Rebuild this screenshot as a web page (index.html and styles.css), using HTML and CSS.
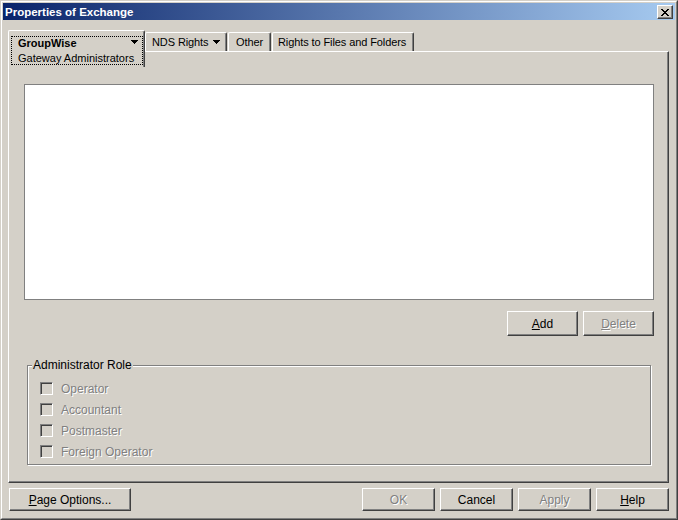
FILE: index.html
```html
<!DOCTYPE html>
<html>
<head>
<meta charset="utf-8">
<title>Properties of Exchange</title>
<link rel="stylesheet" href="styles.css">
</head>
<body>
<div class="window">
  <div class="frame">
    <div class="titlebar">
      <span class="title">Properties of Exchange</span>
      <button class="close" type="button">
        <svg width="8" height="7" viewBox="0 0 8 7" shape-rendering="crispEdges">
          <path fill="#000" d="M0 0h2v1H0zM6 0h2v1H6zM1 1h2v1H1zM5 1h2v1H5zM2 2h4v1H2zM3 3h2v1H3zM2 4h4v1H2zM1 5h2v1H1zM5 5h2v1H5zM0 6h2v1H0zM6 6h2v1H6z"/>
        </svg>
      </button>
    </div>
    <div class="client">
      <div class="tabs">
        <div class="tab sel">
          <div class="focus">
            <div class="focus-line1"><span>GroupWise</span><svg class="arrow" width="7" height="4" viewBox="0 0 7 4" shape-rendering="crispEdges"><path d="M0 0h7v1H0zM1 1h5v1H1zM2 2h3v1H2zM3 3h1v1H3z"/></svg></div>
            <div class="focus-line2">Gateway Administrators</div>
          </div>
        </div>
        <div class="tab plain nds"><span>NDS Rights</span><svg class="arrow" width="7" height="4" viewBox="0 0 7 4" shape-rendering="crispEdges"><path d="M0 0h7v1H0zM1 1h5v1H1zM2 2h3v1H2zM3 3h1v1H3z"/></svg></div>
        <div class="tab plain other">Other</div>
        <div class="tab plain rights">Rights to Files and Folders</div>
      </div>
      <div class="panel">
        <div class="listbox"></div>
        <div class="actions">
          <button class="btn act" type="button"><u>A</u>dd</button>
          <button class="btn act dis" type="button"><u>D</u>elete</button>
        </div>
        <div class="group">
          <div class="group-label">Administrator Role</div>
          <div class="checks">
            <div class="check"><span class="box"></span><span>Operator</span></div>
            <div class="check"><span class="box"></span><span>Accountant</span></div>
            <div class="check"><span class="box"></span><span>Postmaster</span></div>
            <div class="check"><span class="box"></span><span>Foreign Operator</span></div>
          </div>
        </div>
      </div>
      <div class="footer">
        <button class="btn wide" type="button"><u>P</u>age Options...</button>
        <div class="footer-right">
          <button class="btn std dis" type="button">OK</button>
          <button class="btn std" type="button">Cancel</button>
          <button class="btn std dis" type="button">Apply</button>
          <button class="btn std" type="button"><u>H</u>elp</button>
        </div>
      </div>
    </div>
  </div>
</div>
</body>
</html>
```
FILE: styles.css
```css
body {
  margin: 0;
  font-family: "Liberation Sans", Arial, sans-serif;
  font-size: 11px;
  color: #000;
}

.window {
  width: 678px;
  height: 520px;
  box-sizing: border-box;
  background: #d4d0c8;
  border: 1px solid;
  border-color: #d4d0c8 #404040 #404040 #d4d0c8;
}

.frame {
  height: 100%;
  box-sizing: border-box;
  border: 1px solid;
  border-color: #fff #808080 #808080 #fff;
  padding: 1px;
  display: flex;
  flex-direction: column;
}

.titlebar {
  height: 17px;
  flex: none;
  background: linear-gradient(to right, #0a246a, #a6caf0);
  display: flex;
  align-items: flex-start;
  justify-content: space-between;
}

.title {
  color: #fff;
  font-weight: bold;
  font-size: 11.5px;
  line-height: 18px;
  padding-left: 2px;
}

.close {
  width: 16px;
  height: 14px;
  margin: 2px 2px 0 0;
  padding: 0;
  box-sizing: border-box;
  border: 1px solid;
  border-color: #fff #404040 #404040 #fff;
  box-shadow: inset -1px -1px #808080;
  background: #d4d0c8;
  display: flex;
  align-items: center;
  justify-content: center;
}

.close svg {
  display: block;
}

.client {
  padding: 10px 0 0 5px;
}

.tabs {
  display: flex;
  height: 21px;
  align-items: flex-start;
}

.tab {
  box-sizing: border-box;
  background: #d4d0c8;
  border-left: 1px solid #fff;
  border-top: 1px solid #fff;
  border-right: 1px solid #404040;
  box-shadow: inset -1px 0 #808080;
  border-radius: 2px 2px 0 0;
  white-space: nowrap;
}

.tab.sel {
  width: 137px;
  height: 37px;
  position: relative;
  z-index: 1;
  padding: 5px 1px 0 2px;
}

.focus {
  border: 1px dotted #000;
  height: 29px;
  box-sizing: border-box;
  padding-left: 6px;
}

.focus-line1 {
  display: flex;
  justify-content: space-between;
  align-items: flex-start;
  height: 14px;
  line-height: 12px;
  padding-right: 4px;
  font-weight: bold;
}

.focus-line1 .arrow {
  margin-top: 3px;
}

.focus-line2 {
  line-height: 14px;
}

.arrow {
  display: block;
  fill: #000;
  flex: none;
}

.tab.plain {
  height: 19px;
  margin-top: 2px;
  line-height: 18px;
  letter-spacing: -0.1px;
}

.tab.nds {
  width: 82px;
  display: flex;
  justify-content: space-between;
  align-items: flex-start;
  padding: 0 6px 0 6px;
}

.tab.nds .arrow {
  margin-top: 7px;
}

.tab.other {
  width: 43px;
  margin-left: 1px;
  text-align: center;
}

.tab.rights {
  width: 142px;
  margin-left: 1px;
  padding-left: 5px;
}

.panel {
  width: 661px;
  height: 432px;
  box-sizing: border-box;
  border: 1px solid;
  border-color: #fff #404040 #404040 #fff;
  box-shadow: inset -1px -1px #808080;
  padding: 32px 14px 0 15px;
}

.listbox {
  height: 216px;
  box-sizing: border-box;
  background: #fff;
  border: 1px solid #808080;
}

.actions {
  display: flex;
  justify-content: flex-end;
  gap: 5px;
  margin-top: 11px;
}

.btn {
  box-sizing: border-box;
  background: #d4d0c8;
  border: 1px solid;
  border-color: #fff #404040 #404040 #fff;
  box-shadow: inset -1px -1px #808080;
  font-family: "Liberation Sans", Arial, sans-serif;
  font-size: 12px;
  color: #000;
  padding: 0;
  margin: 0;
  text-align: center;
}

.btn u {
  text-decoration: underline;
  text-underline-offset: 1px;
}

.btn.act {
  width: 71px;
  height: 25px;
}

.btn.dis {
  color: #808080;
  text-shadow: 1px 1px 0 #fff;
}

.group {
  margin: 29px 0 0 3px;
  width: 624px;
  height: 100px;
  box-sizing: border-box;
  border: 1px solid #808080;
  box-shadow: 1px 1px 0 #fff, inset 1px 1px 0 #fff;
  font-size: 12px;
}

.group-label {
  width: max-content;
  margin: -8px 0 0 4px;
  padding: 0 1px;
  line-height: 14px;
  background: #d4d0c8;
}

.checks {
  padding: 6px 0 0 12px;
}

.check {
  display: flex;
  align-items: center;
  gap: 8px;
  height: 21px;
  color: #808080;
  text-shadow: 1px 1px 0 #fff;
}

.box {
  width: 13px;
  height: 13px;
  flex: none;
  box-sizing: border-box;
  border: 1px solid;
  border-color: #808080 #fff #fff #808080;
  box-shadow: inset 1px 1px 0 #404040, inset -1px -1px 0 #d4d0c8;
  background: #d4d0c8;
}

.footer {
  width: 661px;
  box-sizing: border-box;
  display: flex;
  padding: 5px 0 0 1px;
}

.footer-right {
  margin-left: auto;
  display: flex;
  gap: 5px;
}

.btn.wide {
  width: 122px;
  height: 23px;
}

.btn.std {
  width: 73px;
  height: 23px;
}
```
